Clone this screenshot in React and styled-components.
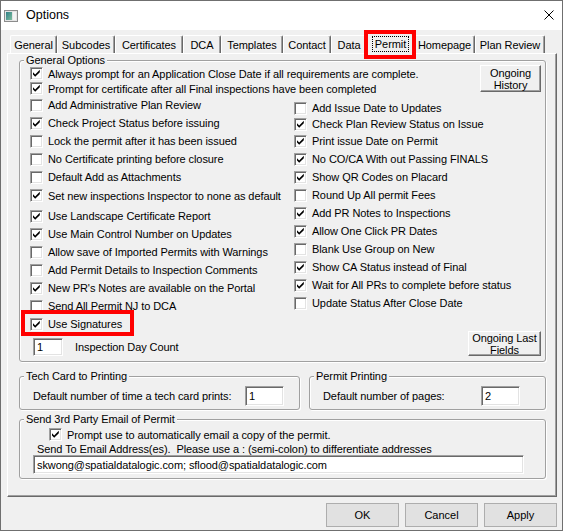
import React from "react";
import styled, { createGlobalStyle } from "styled-components";

const GlobalStyle = createGlobalStyle`
  html, body {
    margin: 0;
    padding: 0;
    background: #f0f0f0;
  }
  body {
    font-family: "Liberation Sans", Arial, sans-serif;
    font-size: 11px;
    letter-spacing: -0.08px;
    color: #000;
  }
`;

const tabs = [
  { label: "General", w: 47 },
  { label: "Subcodes", w: 58 },
  { label: "Certificates", w: 68 },
  { label: "DCA", w: 38 },
  { label: "Templates", w: 62 },
  { label: "Contact", w: 48 },
  { label: "Data", w: 36 },
  { label: "Permit", w: 47, active: true },
  { label: "Homepage", w: 61 },
  { label: "Plan Review", w: 70 },
];

// left column of General Options, h = row height, mt = extra space above
const leftOptions = [
  { text: "Add Administrative Plan Review", h: 18 },
  { text: "Check Project Status before issuing", on: true, h: 18 },
  { text: "Lock the permit after it has been issued", h: 18 },
  { text: "No Certificate printing before closure", h: 18 },
  { text: "Default Add as Attachments", h: 18 },
  { text: "Set new inspections Inspector to none as default", on: true, h: 19 },
  { text: "Use Landscape Certificate Report", on: true, h: 18, mt: 2 },
  { text: "Use Main Control Number on Updates", on: true, h: 18 },
  { text: "Allow save of Imported Permits with Warnings", h: 18 },
  { text: "Add Permit Details to Inspection Comments", h: 18 },
  { text: "New PR's Notes are available on the Portal", on: true, h: 18 },
  { text: "Send All Permit NJ to DCA", h: 18 },
  { text: "Use Signatures", on: true, h: 18, marked: true },
];

const rightOptions = [
  { text: "Add Issue Date to Updates", h: 16 },
  { text: "Check Plan Review Status on Issue", on: true, h: 16 },
  { text: "Print issue Date on Permit", on: true, h: 18 },
  { text: "No CO/CA With out Passing FINALS", on: true, h: 18 },
  { text: "Show QR Codes on Placard", on: true, h: 18 },
  { text: "Round Up All permit Fees", h: 18 },
  { text: "Add PR Notes to Inspections", on: true, h: 18 },
  { text: "Allow One Click PR Dates", on: true, h: 18 },
  { text: "Blank Use Group on New", h: 18 },
  { text: "Show CA Status instead of Final", on: true, h: 18 },
  { text: "Wait for All PRs to complete before status", on: true, h: 18 },
  { text: "Update Status After Close Date", h: 18 },
];

const Checkbox = ({ on }) => (
  <Box>
    {on && (
      <svg width="9" height="9" viewBox="0 0 9 9">
        <path d="M1 3.2 L3.2 5.4 L7.8 0.8 L7.8 3.2 L3.2 7.8 L1 5.6 Z" fill="#000" />
      </svg>
    )}
  </Box>
);

const Option = ({ text, on, h, mt, marked }) => (
  <CheckRow $h={h} $mt={mt} $marked={marked}>
    <Checkbox on={on} />
    <span>{text}</span>
  </CheckRow>
);

const App = () => {
  return (
    <>
      <GlobalStyle />
      <Window>
        <TitleBar>
          <svg width="14" height="12" viewBox="0 0 14 12">
            <defs>
              <linearGradient id="appGrad" x1="0" y1="0" x2="1" y2="1">
                <stop offset="0" stopColor="#2e7f86" />
                <stop offset="1" stopColor="#7fbf9f" />
              </linearGradient>
            </defs>
            <rect x="0.5" y="0.5" width="13" height="11" fill="#e4e4e4" stroke="#8c8c8c" />
            <rect x="2" y="2" width="6" height="8" fill="url(#appGrad)" />
            <rect x="9" y="2" width="3" height="8" fill="#f4f4f4" />
          </svg>
          <Title>Options</Title>
          <CloseIcon width="10" height="10" viewBox="0 0 10 10">
            <path d="M0.5 0.5 L9.5 9.5 M9.5 0.5 L0.5 9.5" stroke="#000" strokeWidth="1" />
          </CloseIcon>
        </TitleBar>

        <Body>
          <TabStrip>
            {tabs.map((t) => (
              <Tab key={t.label} $w={t.w} $active={t.active}>
                {t.active ? <Focus>{t.label}</Focus> : t.label}
              </Tab>
            ))}
          </TabStrip>

          <Panel>
            <Group>
              <Legend>General Options</Legend>
              <GeneralBody>
                <TopBlock>
                  <div>
                    <Option
                      h={15}
                      on
                      text="Always prompt for an Application Close Date if all requirements are complete."
                    />
                    <Option
                      h={15}
                      on
                      text="Prompt for certificate after all Final inspections have been completed"
                    />
                  </div>
                  <ClassicButton $w={61} $h={27}>
                    Ongoing
                    <br />
                    History
                  </ClassicButton>
                </TopBlock>
                <Columns>
                  <Column>
                    {leftOptions.map((o) => (
                      <Option key={o.text} {...o} />
                    ))}
                    <DayRow>
                      <TextBox $w={30} $h={18}>1</TextBox>
                      <span>Inspection Day Count</span>
                    </DayRow>
                  </Column>
                  <Column $top={4}>
                    {rightOptions.map((o) => (
                      <Option key={o.text} {...o} />
                    ))}
                    <ClassicButton $w={73} $h={25} $bottom>
                      Ongoing Last
                      <br />
                      Fields
                    </ClassicButton>
                  </Column>
                </Columns>
              </GeneralBody>
            </Group>

            <PrintRow>
              <Group $w={281}>
                <Legend>Tech Card to Printing</Legend>
                <PrintBody $right={15}>
                  <span>Default number of time a tech card prints:</span>
                  <TextBox $w={39} $h={20}>1</TextBox>
                </PrintBody>
              </Group>
              <Group $grow>
                <Legend>Permit Printing</Legend>
                <PrintBody $right={25}>
                  <span>Default number of pages:</span>
                  <TextBox $w={39} $h={20}>2</TextBox>
                </PrintBody>
              </Group>
            </PrintRow>

            <Group $mt={3}>
              <Legend>Send 3rd Party Email of Permit</Legend>
              <EmailBody>
                <EmailCheck>
                  <Option h={19} on text="Prompt use to automatically email a copy of the permit." />
                </EmailCheck>
                <EmailHint>
                  Send To Email Address(es).&nbsp; Please use a : (semi-colon) to differentiate addresses
                </EmailHint>
                <TextBox $h={19}>skwong@spatialdatalogic.com; sflood@spatialdatalogic.com</TextBox>
              </EmailBody>
            </Group>
          </Panel>

          <Footer>
            <DialogButton>OK</DialogButton>
            <DialogButton>Cancel</DialogButton>
            <DialogButton>Apply</DialogButton>
          </Footer>
        </Body>
      </Window>
    </>
  );
};

const Window = styled.div`
  width: 563px;
  height: 531px;
  box-sizing: border-box;
  border: 1px solid #6f6f6f;
  background: #f0f0f0;
  display: flex;
  flex-direction: column;
  overflow: hidden;
`;

const TitleBar = styled.div`
  height: 29px;
  flex: none;
  background: #fff;
  display: flex;
  align-items: center;
  padding-left: 3px;
`;

const Title = styled.span`
  margin-left: 8px;
  font-size: 12.5px;
  letter-spacing: 0;
  padding-bottom: 2px;
`;

const CloseIcon = styled.svg`
  margin-left: auto;
  margin-right: 8px;
  margin-bottom: 2px;
`;

const Body = styled.div`
  flex: 1;
  display: flex;
  flex-direction: column;
  padding: 3px 5px 0 6px;
`;

const TabStrip = styled.div`
  display: flex;
  align-items: flex-end;
  height: 20px;
  margin-left: 3px;
`;

const Tab = styled.div`
  width: ${(p) => p.$w}px;
  height: ${(p) => (p.$active ? 22 : 18)}px;
  margin-bottom: ${(p) => (p.$active ? -2 : 0)}px;
  box-sizing: border-box;
  background: #f0f0f0;
  border-top: 1px solid #fff;
  border-left: 1px solid #fff;
  border-right: 1px solid #696969;
  border-top-left-radius: 2px;
  border-top-right-radius: 2px;
  box-shadow: inset -1px 0 0 #a0a0a0;
  display: flex;
  justify-content: center;
  align-items: ${(p) => (p.$active ? "flex-start" : "center")};
  padding-top: ${(p) => (p.$active ? 2 : 1)}px;
  white-space: nowrap;
  position: relative;
  z-index: ${(p) => (p.$active ? 2 : 0)};

  ${(p) =>
    p.$active &&
    `
    &::after {
      content: "";
      position: absolute;
      left: -4px;
      right: -3px;
      top: -4px;
      bottom: -4px;
      border: 4px solid #f00;
    }
  `}
`;

const Focus = styled.span`
  border: 1px dotted #000;
  padding: 1px 2px;
  line-height: 12px;
`;

const Panel = styled.div`
  border: 1px solid;
  border-color: #fff #696969 #696969 #fff;
  box-shadow: inset -1px -1px 0 #a0a0a0;
  padding: 0 10px 17px 11px;
  position: relative;
  z-index: 1;
`;

const Group = styled.fieldset`
  margin: ${(p) => p.$mt || 0}px 0 0 0;
  padding: 0;
  min-width: 0;
  border: 1px solid #a0a0a0;
  border-radius: 3px;
  box-shadow: inset 1px 1px 0 #fff, 1px 1px 0 #fff;
  ${(p) => (p.$w ? `width: ${p.$w}px; flex: none; box-sizing: border-box;` : "")}
  ${(p) => (p.$grow ? "flex: 1;" : "")}
`;

const Legend = styled.legend`
  margin-left: 4px;
  padding: 0 2px;
  line-height: 12px;
  background: #f0f0f0;
`;

const GeneralBody = styled.div`
  padding: 0 4px 5px 10px;
`;

const TopBlock = styled.div`
  display: flex;
  align-items: flex-start;
  justify-content: space-between;
`;

const Columns = styled.div`
  display: grid;
  grid-template-columns: 264px 1fr;
`;

const Column = styled.div`
  display: flex;
  flex-direction: column;
  padding-top: ${(p) => p.$top || 0}px;
`;

const CheckRow = styled.label`
  display: flex;
  align-items: center;
  gap: 5px;
  height: ${(p) => p.$h}px;
  margin-top: ${(p) => p.$mt || 0}px;
  white-space: nowrap;
  position: relative;

  ${(p) =>
    p.$marked &&
    `
    &::after {
      content: "";
      position: absolute;
      left: -9px;
      top: -5px;
      width: 113px;
      height: 26px;
      box-sizing: border-box;
      border: 4px solid #f00;
    }
  `}
`;

const Box = styled.span`
  width: 13px;
  height: 13px;
  flex: none;
  box-sizing: border-box;
  background: #fff;
  border: 1px solid;
  border-color: #a0a0a0 #fff #fff #a0a0a0;
  box-shadow: inset 1px 1px 0 #696969, inset -1px -1px 0 #e3e3e3;
  display: flex;
  align-items: center;
  justify-content: center;
`;

const TextBox = styled.div`
  width: ${(p) => (p.$w ? `${p.$w}px` : "auto")};
  height: ${(p) => p.$h}px;
  flex: none;
  box-sizing: border-box;
  background: #fff;
  border: 1px solid;
  border-color: #a0a0a0 #fff #fff #a0a0a0;
  box-shadow: inset 1px 1px 0 #696969, inset -1px -1px 0 #e3e3e3;
  padding: 0 3px;
  display: flex;
  align-items: center;
  white-space: nowrap;
`;

const DayRow = styled.div`
  display: flex;
  align-items: center;
  gap: 12px;
  margin: 5px 0 0 3px;
`;

const ClassicButton = styled.div`
  width: ${(p) => p.$w}px;
  height: ${(p) => p.$h}px;
  box-sizing: border-box;
  flex: none;
  background: #f0f0f0;
  border: 1px solid;
  border-color: #fff #696969 #696969 #fff;
  box-shadow: inset -1px -1px 0 #a0a0a0;
  display: flex;
  align-items: center;
  justify-content: center;
  text-align: center;
  line-height: 12px;
  margin-top: -1px;
  ${(p) => (p.$bottom ? "margin-top: auto; align-self: flex-end;" : "")}
`;

const PrintRow = styled.div`
  display: flex;
  gap: 9px;
  margin-top: 8px;
`;

const PrintBody = styled.div`
  display: flex;
  align-items: center;
  justify-content: space-between;
  padding: 4px ${(p) => p.$right}px 3px 13px;
  white-space: nowrap;
`;

const EmailBody = styled.div`
  padding: 0 21px 4px 13px;
  display: flex;
  flex-direction: column;
`;

const EmailCheck = styled.div`
  margin-left: 16px;
`;

const EmailHint = styled.div`
  margin-left: 4px;
  height: 11px;
  line-height: 11px;
  white-space: nowrap;
`;

const Footer = styled.div`
  display: flex;
  justify-content: flex-end;
  gap: 6px;
  margin-top: 6px;
`;

const DialogButton = styled.button`
  width: 73px;
  height: 24px;
  padding: 0;
  background: #e1e1e1;
  border: 1px solid #adadad;
  font-family: inherit;
  font-size: 11px;
  color: #000;
`;

export default App;
